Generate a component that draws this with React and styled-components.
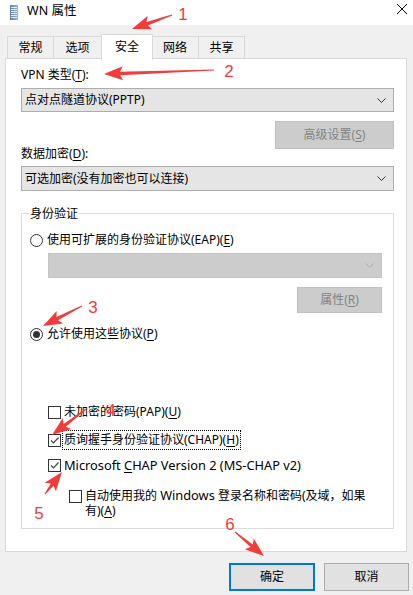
import React from 'react';
import styled, { createGlobalStyle } from 'styled-components';

const GlobalStyle = createGlobalStyle`
  html, body {
    margin: 0;
    padding: 0;
    background: #f0f0f0;
  }
  body {
    font-family: 'Noto Sans', 'Noto Sans CJK SC', sans-serif;
    font-size: 12px;
    color: #000;
  }
`;

const Window = styled.div`
  position: relative;
  width: 413px;
  height: 595px;
  display: flex;
  flex-direction: column;
  background: #f0f0f0;
  overflow: hidden;
`;

const TitleBar = styled.div`
  height: 25px;
  background: #fff;
  display: flex;
  align-items: center;
  padding-left: 10px;
  box-sizing: border-box;
`;

const TitleText = styled.span`
  margin-left: 9px;
  font-size: 12.5px;
  line-height: 16px;
  margin-top: -3px;
  flex: 1;
`;

const CloseBtn = styled.div`
  width: 46px;
  height: 25px;
  display: flex;
  align-items: flex-start;
  justify-content: flex-end;
  padding: 4px 6px 0 0;
  box-sizing: border-box;
`;

const TabStrip = styled.div`
  display: flex;
  align-items: flex-end;
  height: 26px;
  margin-top: 8px;
  padding-left: 7px;
  position: relative;
  z-index: 1;
`;

const Tab = styled.div`
  box-sizing: border-box;
  width: ${(p) => p.$w}px;
  height: ${(p) => (p.$active ? 26 : 23)}px;
  margin-left: ${(p) => (p.$active ? -1 : 0)}px;
  margin-right: ${(p) => (p.$active ? -1 : 0)}px;
  border: 1px solid #d9d9d9;
  border-bottom: ${(p) => (p.$active ? 'none' : '1px solid #d9d9d9')};
  border-left: ${(p) => (p.$first || p.$active ? '1px solid #d9d9d9' : 'none')};
  background: ${(p) => (p.$active ? '#fff' : '#f0f0f0')};
  display: flex;
  align-items: center;
  justify-content: center;
  line-height: 16px;
  padding-bottom: ${(p) => (p.$active ? 2 : 0)}px;
  position: relative;
  z-index: ${(p) => (p.$active ? 2 : 1)};
  margin-bottom: ${(p) => (p.$active ? -1 : 0)}px;
`;

const Panel = styled.div`
  box-sizing: border-box;
  margin: -1px 6px 0 5px;
  height: 494px;
  border: 1px solid #d9d9d9;
  background: #fff;
  padding: 8px 12px 0 15px;
  display: flex;
  flex-direction: column;
`;

const FieldLabel = styled.div`
  line-height: 16px;
  margin-top: ${(p) => p.$mt || 0}px;
`;

const Key = styled.span`
  text-decoration: underline;
  text-underline-offset: 2px;
`;

const Latin = styled.span`
  font-size: 12.8px;
`;

const Combo = styled.div`
  box-sizing: border-box;
  height: ${(p) => p.$h || 24}px;
  margin-top: ${(p) => p.$mt || 0}px;
  margin-left: ${(p) => p.$ml || 0}px;
  background: ${(p) => (p.$disabled ? '#cccccc' : '#e5e5e5')};
  border: 1px solid ${(p) => (p.$disabled ? '#c4c4c4' : '#adadad')};
  display: flex;
  align-items: center;
  padding: 0 7px 0 3px;
  line-height: 16px;
`;

const ComboText = styled.span`
  flex: 1;
`;

const ButtonRow = styled.div`
  display: flex;
  justify-content: flex-end;
  margin-top: ${(p) => p.$mt || 0}px;
`;

const Button = styled.div`
  box-sizing: border-box;
  width: ${(p) => p.$w}px;
  height: ${(p) => p.$h || 28}px;
  background: ${(p) => (p.$disabled ? '#cccccc' : '#e1e1e1')};
  border: ${(p) =>
    p.$primary ? '2px solid #0078d7' : p.$disabled ? '1px solid #bfbfbf' : '1px solid #adadad'};
  color: ${(p) => (p.$disabled ? '#838383' : '#000')};
  display: flex;
  align-items: center;
  justify-content: center;
  line-height: 16px;
`;

const GroupBox = styled.div`
  box-sizing: border-box;
  margin-top: 22px;
  border: 1px solid #dcdcdc;
  padding: 0 11px 10px 8px;
  display: flex;
  flex-direction: column;
`;

const GroupTitle = styled.div`
  align-self: flex-start;
  margin-top: -8px;
  margin-left: -1px;
  padding: 0 1px;
  background: #fff;
  line-height: 16px;
`;

const OptionRow = styled.div`
  display: flex;
  align-items: flex-start;
  margin-top: ${(p) => p.$mt || 0}px;
  margin-left: ${(p) => p.$ml || 0}px;
  line-height: ${(p) => p.$lh || 16}px;
`;

const RadioMark = styled.span`
  box-sizing: border-box;
  flex: none;
  width: 13px;
  height: 13px;
  margin-top: 2px;
  margin-right: 4px;
  border: 1px solid #333;
  border-radius: 50%;
  background: #fff;
  display: flex;
  align-items: center;
  justify-content: center;

  &::after {
    content: '';
    display: ${(p) => (p.$checked ? 'block' : 'none')};
    width: 7px;
    height: 7px;
    border-radius: 50%;
    background: #333;
  }
`;

const CheckMark = styled.span`
  box-sizing: border-box;
  flex: none;
  width: 13px;
  height: 13px;
  margin-top: 2px;
  margin-right: 3px;
  border: 1px solid #333;
  background: #fff;
  display: flex;
  align-items: center;
  justify-content: center;
`;

const FocusLabel = styled.span`
  outline: 1px dotted #000;
  outline-offset: 1px;
`;

const Footer = styled.div`
  display: flex;
  justify-content: flex-end;
  gap: 9px;
  margin-top: 11px;
  padding-right: 4px;
`;

const Overlay = styled.svg`
  position: absolute;
  left: 0;
  top: 0;
  pointer-events: none;
  z-index: 10;
`;

const Chevron = ({ color = '#333' }) => (
  <svg width="9" height="5" viewBox="0 0 9 5">
    <path d="M0.5 0.5 L4.5 4.5 L8.5 0.5" fill="none" stroke={color} strokeWidth="1" />
  </svg>
);

const Check = ({ checked }) => (
  <CheckMark>
    {checked && (
      <svg width="11" height="11" viewBox="0 0 11 11">
        <path d="M2 5.5 L4.5 8 L9.5 2.5" fill="none" stroke="#444" strokeWidth="1.2" />
      </svg>
    )}
  </CheckMark>
);

const AppIcon = () => (
  <svg width="8" height="15" viewBox="0 0 8 15">
    <defs>
      <linearGradient id="ic" x1="0" x2="1" y1="0" y2="0">
        <stop offset="0" stopColor="#5b7fa6" />
        <stop offset="1" stopColor="#9fb6cf" />
      </linearGradient>
    </defs>
    <rect x="0" y="0" width="8" height="15" fill="url(#ic)" />
    {[2, 4, 6, 8, 10, 12].map((y) => (
      <rect key={y} x="1" y={y} width="6" height="1" fill="#e4ecf4" />
    ))}
  </svg>
);

// tapered arrow from tail to tip
const arrowPoints = (tx, ty, px, py, head = 16, half = 7, w0 = 1, w1 = 3.5) => {
  const len = Math.hypot(px - tx, py - ty);
  const dx = (px - tx) / len;
  const dy = (py - ty) / len;
  const nx = -dy;
  const ny = dx;
  const bx = px - dx * head;
  const by = py - dy * head;
  const bbx = bx - dx * 3;
  const bby = by - dy * 3;
  const pts = [
    [tx + (nx * w0) / 2, ty + (ny * w0) / 2],
    [bx + (nx * w1) / 2, by + (ny * w1) / 2],
    [bbx + nx * half, bby + ny * half],
    [px, py],
    [bbx - nx * half, bby - ny * half],
    [bx - (nx * w1) / 2, by - (ny * w1) / 2],
    [tx - (nx * w0) / 2, ty - (ny * w0) / 2],
  ];
  return pts.map((p) => p.map((v) => v.toFixed(1)).join(',')).join(' ');
};

const marks = [
  { n: '1', x: 183, y: 20, a: [172, 15, 132, 29] },
  { n: '2', x: 229, y: 77, a: [214, 70, 104, 74] },
  { n: '3', x: 93, y: 313, a: [82, 306, 43, 326] },
  { n: '4', x: 111, y: 416, a: [86, 409, 52, 435] },
  { n: '5', x: 39, y: 519, a: [45, 494, 62, 472] },
  { n: '6', x: 230, y: 530, a: [235, 532, 264, 556] },
];

const Annotations = () => (
  <Overlay width="413" height="595" viewBox="0 0 413 595">
    {marks.map((m) => (
      <g key={m.n}>
        <polygon points={arrowPoints(...m.a)} fill="#f23b3b" />
        <text
          x={m.x}
          y={m.y}
          fill="#f23b3b"
          fontSize="17"
          fontFamily="'Liberation Sans', Arial, sans-serif"
          textAnchor="middle"
        >
          {m.n}
        </text>
      </g>
    ))}
  </Overlay>
);

const tabs = [
  { label: '常规', w: 47 },
  { label: '选项', w: 48 },
  { label: '安全', w: 52, active: true },
  { label: '网络', w: 47 },
  { label: '共享', w: 46 },
];

export default function App() {
  return (
    <Window>
      <GlobalStyle />
      <TitleBar>
        <AppIcon />
        <TitleText>WN 属性</TitleText>
        <CloseBtn>
          <svg width="10" height="10" viewBox="0 0 10 10">
            <path d="M0 0 L10 10 M10 0 L0 10" stroke="#000" strokeWidth="1" />
          </svg>
        </CloseBtn>
      </TitleBar>

      <TabStrip>
        {tabs.map((t, i) => (
          <Tab key={t.label} $w={t.w} $active={t.active} $first={i === 0}>
            {t.label}
          </Tab>
        ))}
      </TabStrip>

      <Panel>
        <FieldLabel>
          VPN 类型(<Key>T</Key>):
        </FieldLabel>
        <Combo $mt={5}>
          <ComboText>点对点隧道协议(PPTP)</ComboText>
          <Chevron />
        </Combo>
        <ButtonRow $mt={9}>
          <Button $w={119} $disabled>
            高级设置(<Key>S</Key>)
          </Button>
        </ButtonRow>
        <FieldLabel $mt={-3}>
          数据加密(<Key>D</Key>):
        </FieldLabel>
        <Combo $mt={4} $h={25}>
          <ComboText>可选加密(没有加密也可以连接)</ComboText>
          <Chevron />
        </Combo>

        <GroupBox>
          <GroupTitle>身份验证</GroupTitle>
          <OptionRow $mt={10}>
            <RadioMark />
            <span>
              使用可扩展的身份验证协议(EAP)(<Key>E</Key>)
            </span>
          </OptionRow>
          <Combo $mt={5} $h={25} $ml={18} $disabled>
            <ComboText />
            <Chevron color="#a8a8a8" />
          </Combo>
          <ButtonRow $mt={9}>
            <Button $w={85} $h={26} $disabled>
              属性(<Key>R</Key>)
            </Button>
          </ButtonRow>
          <OptionRow $mt={13}>
            <RadioMark $checked />
            <span>
              允许使用这些协议(<Key>P</Key>)
            </span>
          </OptionRow>

          <OptionRow $mt={62} $ml={18}>
            <Check />
            <span>
              未加密的密码(PAP)(<Key>U</Key>)
            </span>
          </OptionRow>
          <OptionRow $mt={12} $ml={18}>
            <Check checked />
            <FocusLabel>
              质询握手身份验证协议(CHAP)(<Key>H</Key>)
            </FocusLabel>
          </OptionRow>
          <OptionRow $mt={9} $ml={18}>
            <Check checked />
            <Latin>
              Microsoft <Key>C</Key>HAP Version 2 (MS-CHAP v2)
            </Latin>
          </OptionRow>
          <OptionRow $mt={15} $ml={39} $lh={15}>
            <Check />
            <span>
              自动使用我的 <Latin>Windows</Latin> 登录名称和密码(及域，如果
              <br />
              有)(<Key>A</Key>)
            </span>
          </OptionRow>
        </GroupBox>
      </Panel>

      <Footer>
        <Button $w={86} $primary>
          确定
        </Button>
        <Button $w={85}>取消</Button>
      </Footer>

      <Annotations />
    </Window>
  );
}
